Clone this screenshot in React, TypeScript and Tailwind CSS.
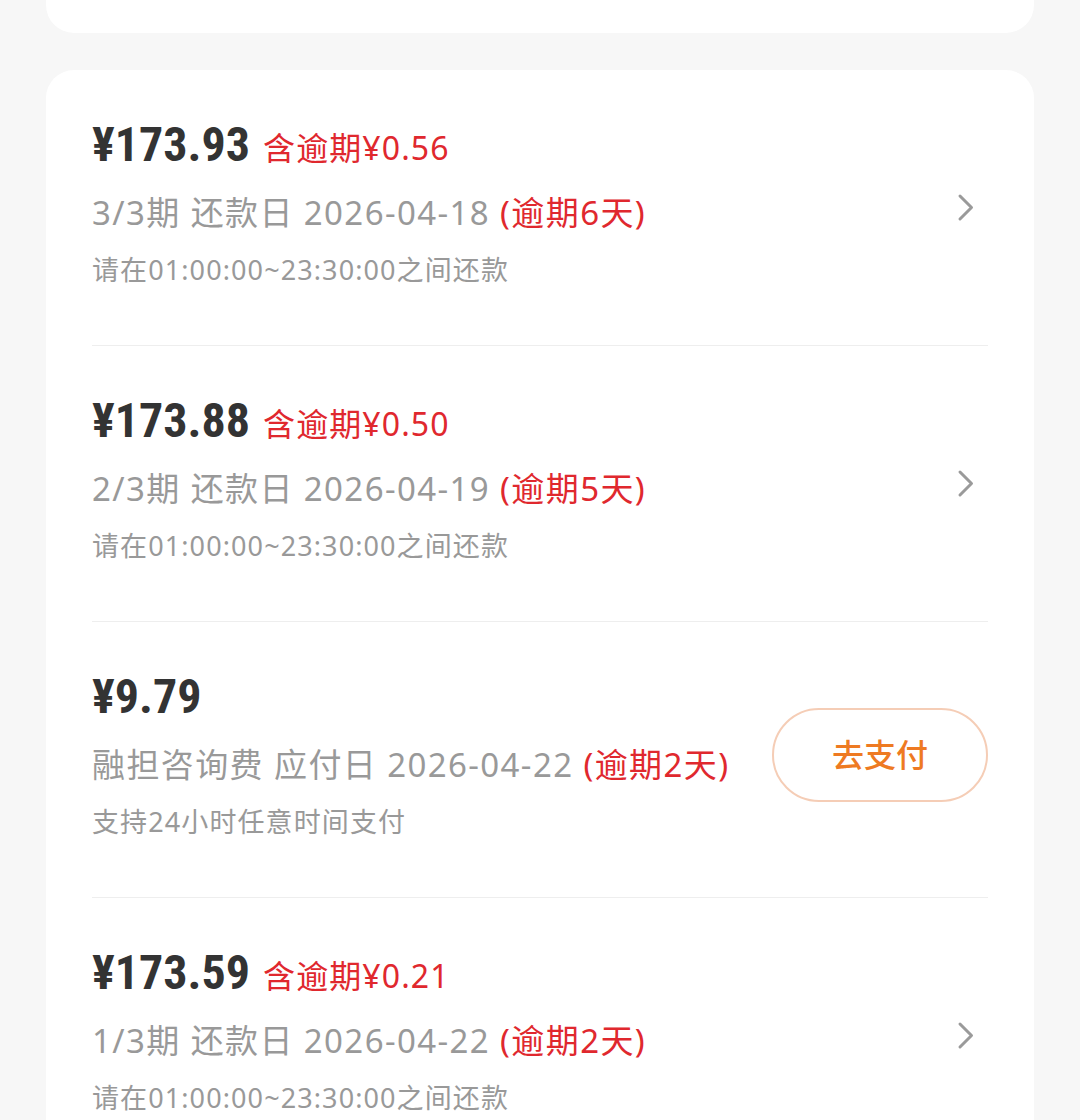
type Bill = {
  amount: string;
  overdueFee?: string;
  label: string;
  dateLabel: string;
  date: string;
  overdueDays: number;
  hint: string;
  action?: string;
};

const bills: Bill[] = [
  {
    amount: "173.93",
    overdueFee: "0.56",
    label: "3/3期",
    dateLabel: "还款日",
    date: "2026-04-18",
    overdueDays: 6,
    hint: "请在01:00:00~23:30:00之间还款",
  },
  {
    amount: "173.88",
    overdueFee: "0.50",
    label: "2/3期",
    dateLabel: "还款日",
    date: "2026-04-19",
    overdueDays: 5,
    hint: "请在01:00:00~23:30:00之间还款",
  },
  {
    amount: "9.79",
    label: "融担咨询费",
    dateLabel: "应付日",
    date: "2026-04-22",
    overdueDays: 2,
    hint: "支持24小时任意时间支付",
    action: "去支付",
  },
  {
    amount: "173.59",
    overdueFee: "0.21",
    label: "1/3期",
    dateLabel: "还款日",
    date: "2026-04-22",
    overdueDays: 2,
    hint: "请在01:00:00~23:30:00之间还款",
  },
];

const text = {
  fontFamily: '"Noto Sans", "Noto Sans CJK SC", sans-serif',
};
const amountFont = {
  fontFamily:
    '"Liberation Sans Narrow", "Roboto Condensed", "DejaVu Sans Condensed", "Noto Sans CJK SC", sans-serif',
};

function Chevron() {
  return (
    <svg
      width="20"
      height="30"
      viewBox="0 0 20 30"
      fill="none"
      className="mt-[10px] mr-[12px] shrink-0"
    >
      <path
        d="M4 3 L15.5 14.5 L4 26"
        stroke="#9a9a9a"
        strokeWidth="3"
        strokeLinecap="round"
        strokeLinejoin="round"
      />
    </svg>
  );
}

function BillRow({ bill, last }: { bill: Bill; last: boolean }) {
  return (
    <div
      className={`flex items-center pt-[47px] pb-[57px] ${last ? "" : "border-b border-[#eeeeee]"}`}
    >
      <div className="min-w-0 flex-1">
        <div className="flex h-[56px] items-center">
          <span
            style={amountFont}
            className="text-[48px] leading-[56px] font-bold text-[#333333]"
          >
            ¥{bill.amount}
          </span>
          {bill.overdueFee ? (
            <span
              style={text}
              className="ml-[13px] pt-[6px] text-[32px] leading-[44px] tracking-[1.1px] text-[#e0282e]"
            >
              含逾期¥{bill.overdueFee}
            </span>
          ) : null}
        </div>
        <p
          style={text}
          className="mt-[18px] text-[33px] leading-[44px] tracking-[1.4px] whitespace-nowrap text-[#999999]"
        >
          {bill.label} {bill.dateLabel} {bill.date}{" "}
          <span className="text-[#e0282e]">(逾期{bill.overdueDays}天)</span>
        </p>
        <p
          style={text}
          className="mt-[17px] text-[27px] leading-[36px] tracking-[1.1px] text-[#999999]"
        >
          {bill.hint}
        </p>
      </div>
      {bill.action ? (
        <button
          type="button"
          style={text}
          className="flex h-[94px] w-[216px] shrink-0 items-center justify-center rounded-full border-2 border-[#f5cdb6] text-[32px] font-medium text-[#ee7a22]"
        >
          {bill.action}
        </button>
      ) : (
        <Chevron />
      )}
    </div>
  );
}

export default function App() {
  return (
    <div className="min-h-[1120px] overflow-hidden bg-[#f7f7f7] px-[46px]">
      <div className="-mt-[40px] h-[73px] rounded-[28px] bg-white" />
      <div className="mt-[37px] rounded-[28px] bg-white px-[46px]">
        {bills.map((bill, i) => (
          <BillRow key={i} bill={bill} last={i === bills.length - 1} />
        ))}
      </div>
    </div>
  );
}
